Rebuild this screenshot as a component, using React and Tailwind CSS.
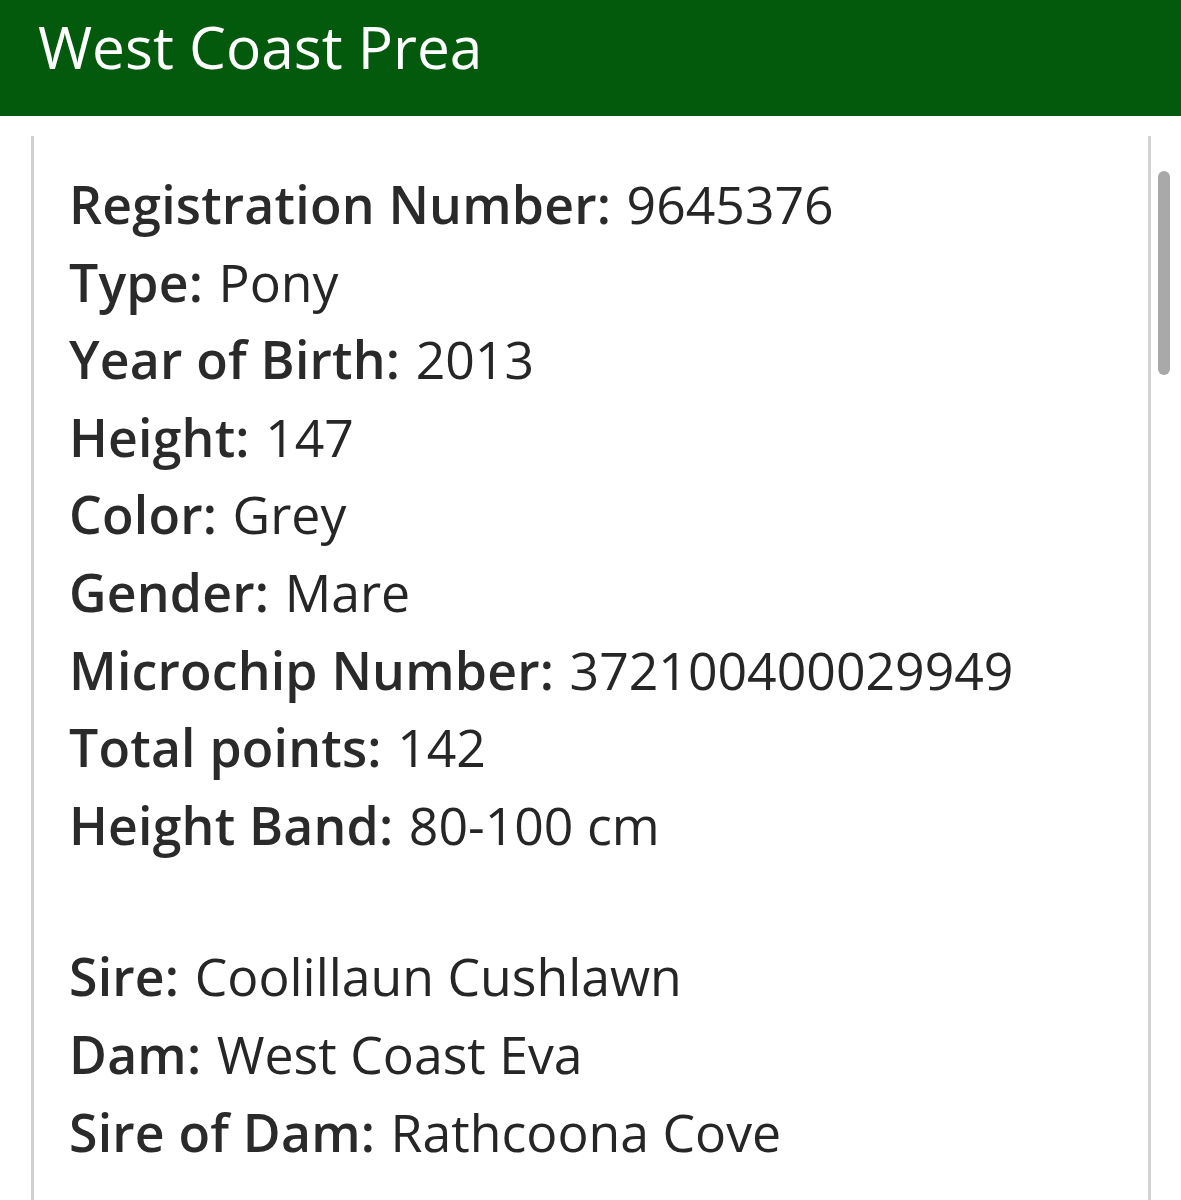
const rows = [
  ["Registration Number:", "9645376"],
  ["Type:", "Pony"],
  ["Year of Birth:", "2013"],
  ["Height:", "147"],
  ["Color:", "Grey"],
  ["Gender:", "Mare"],
  ["Microchip Number:", "372100400029949"],
  ["Total points:", "142"],
  ["Height Band:", "80-100 cm"],
  null,
  ["Sire:", "Coolillaun Cushlawn"],
  ["Dam:", "West Coast Eva"],
  ["Sire of Dam:", "Rathcoona Cove"],
];

export default function App() {
  return (
    <div
      className="relative min-h-[1200px] bg-white text-[#262626]"
      style={{ fontFamily: '"Open Sans", "Noto Sans", sans-serif' }}
    >
      <div className="h-[116px] bg-[#035a0d] px-[38px] pt-[17px]">
        <h1 className="text-[58.6px] font-normal leading-none text-white">
          West Coast Prea
        </h1>
      </div>
      <div className="ml-[31px] mt-[20px] min-h-[1100px] w-[1120px] border-x-[3px] border-[#d2d2d2] pl-[35px] pt-[30px]">
        <div className="text-[51.75px] leading-[77.6px]">
          {rows.map((r, i) =>
            r ? (
              <div key={i} className="whitespace-nowrap">
                <span className="font-semibold tracking-[0.2px] text-[#2a2a2a]">{r[0]}</span>{" "}
                <span className="ml-[2px]">{r[1]}</span>
              </div>
            ) : (
              <div key={i} className="h-[74px]" />
            )
          )}
        </div>
      </div>
      <div className="absolute left-[1158px] top-[171px] h-[204px] w-[12px] rounded-full bg-[#a9a9a9]" />
    </div>
  );
}
